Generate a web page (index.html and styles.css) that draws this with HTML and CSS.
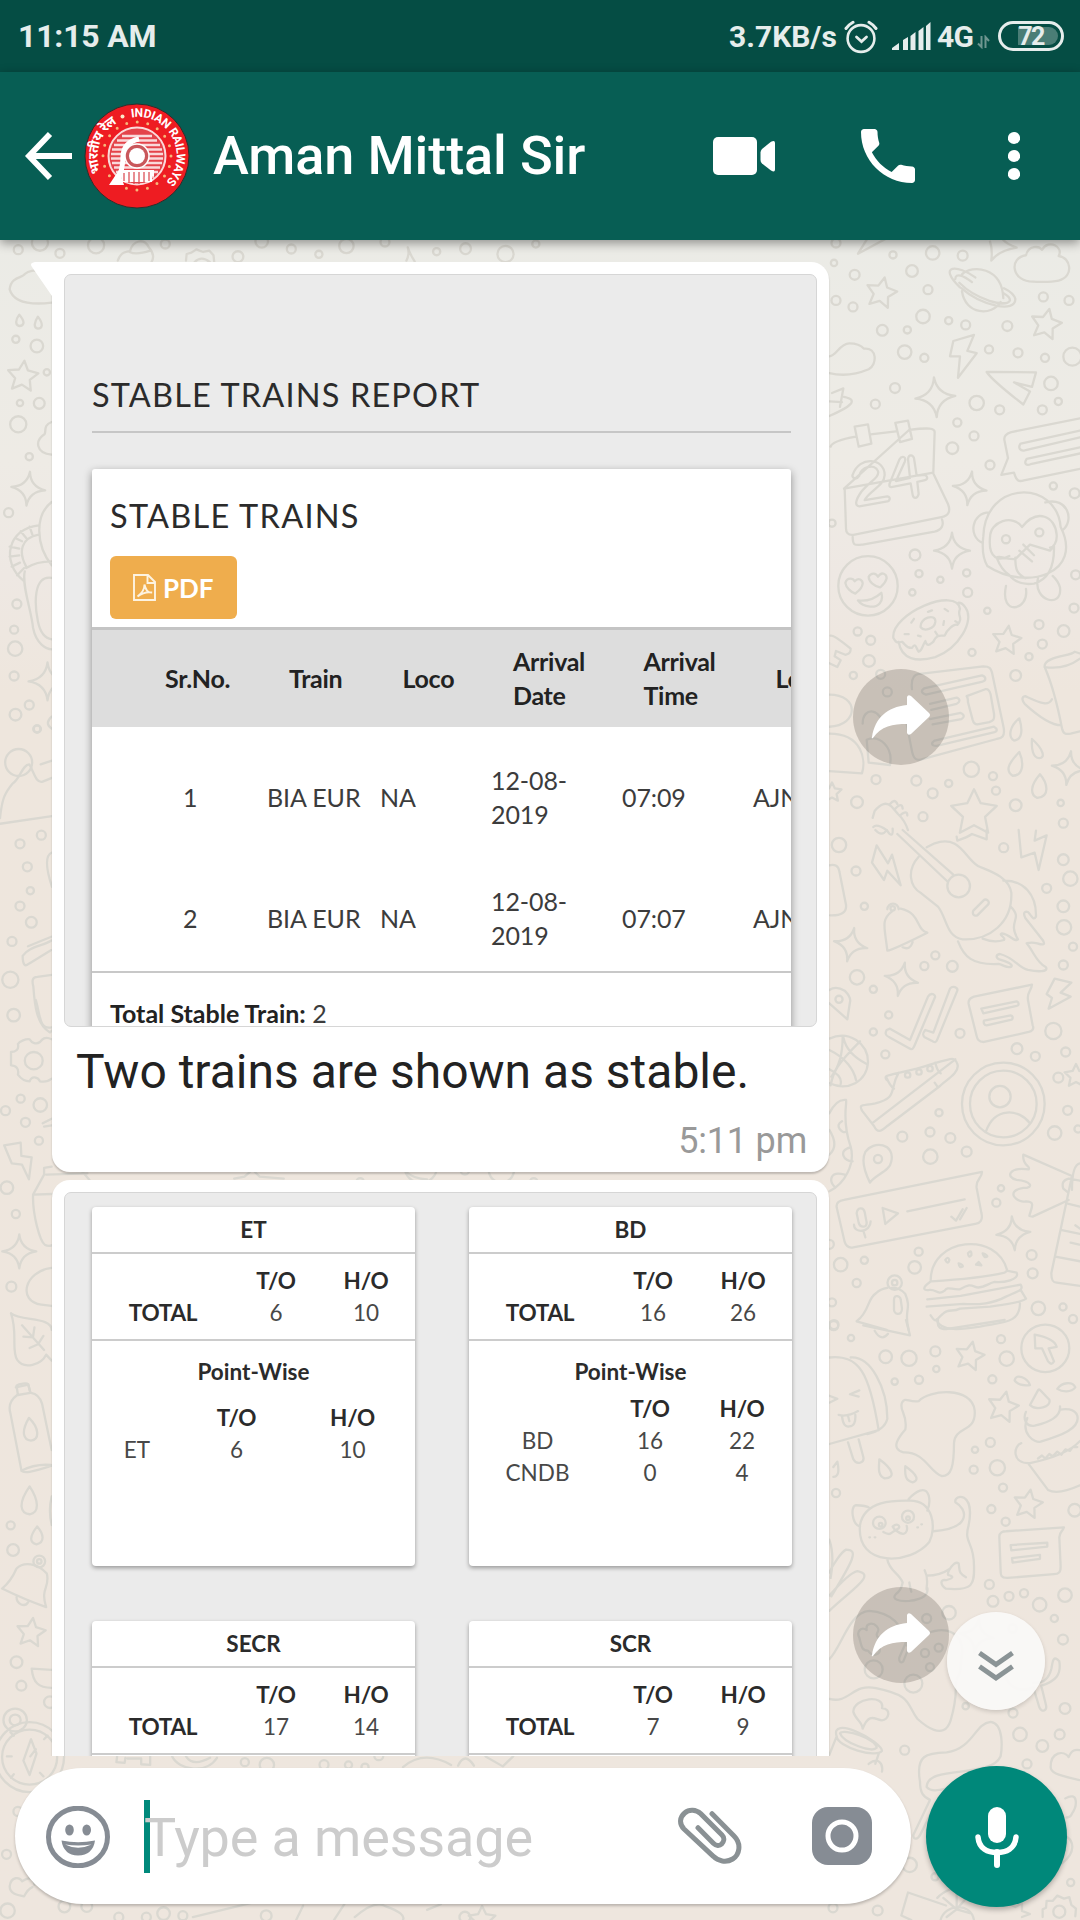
FILE: index.html
```html
<!DOCTYPE html>
<html lang="en">
<head>
<meta charset="utf-8">
<title>Aman Mittal Sir</title>
<link rel="stylesheet" href="styles.css">
</head>
<body>
<svg class="wallpaper" id="wallpaper" width="1080" height="1920" viewBox="0 0 1080 1920" aria-hidden="true">
  <defs><linearGradient id="sky" x1="0" y1="0" x2="0" y2="1"><stop offset=".125" stop-color="#ebebe6"/><stop offset=".24" stop-color="#eeebe5"/><stop offset=".3" stop-color="#eee8e3"/><stop offset=".36" stop-color="#eee6dd"/><stop offset="1" stop-color="#eee6de"/></linearGradient></defs>
  <rect class="sky" width="1080" height="1920" fill="url(#sky)"/>
  <g transform="translate(820 230) scale(.3333 .3827)">
    <path d="M114 62l30-42M114 62l64-30 30-14M510 30q8 20 4 50q22-26 76-34q-30-10-40-20M628 134c-54-5-60-62-10-68c8-28 40-24 48-14c20-30 66-8 50 16c36 2 48 54 0 64c-20 4-60 4-88 2zM426 160c10 62 90 66 116 28M426 116c30-26 120-20 124 62M420 150c-70-60-6-60 46-26M406 128c0-18 26-8 50 8M424 152c60 46 164 66 162 28c-4-14-20-22-34-28M418 138c50 44 140 66 152 46c0-8-6-12-18-18M28 330c22 0 30-34 60-34q30 0 44 14c40-4 40 42 14 54q-60 22-118 10M400 290l62-16-20 42 28 6-56 64 6-56-30 0zM500 371l148 1-12 38-54-12 48 24-20 34q-92-62-110-85zM36 426l34-12-10 48M28 448l38 2M72 436c46 8 20 26-44 50M104 514l40-6 10 50-38 8zM226 504l38-6 12 48-36 8zM32 566c4-14 50-22 76-26M152 534l76-8M268 522c60-6 76-4 76 6l-4 106-268 42zM340 636l44 80c10 22-2 32-20 34l-260 46c-22 4-26-8-26-16l-4-104M98 802c0 24 8 22 30 20l216-34c22-4 28-18 22-32M98 640c20-52 96-44 96 0c0 28-50 44-60 66l68-10c12 2 8 14-4 14l-80 12c-16-2-10-18 6-38c24-26 56-38 50-54c-10-22-54-10-56 12c-10 14-24 4-20-2zM210 660l28-60c8-12 22-8 16 6l-26 50 42-8-6-50c2-12 14-12 18-2l8 46 26-2c8 6 8 12-4 14l-20 4 4 32c-4 14-16 12-18 2l-6-30-58 10c-8 0-6-8-4-12zM780 492l-206 36c-16 4-24 12-20 24l10 44-20 44 38-6c8 24 16 24 30 20l168-30M780 524l-178 34c-10 12 0 20 12 18l166-34M780 568l-160 30c-10 14 0 18 12 14l148-28M490 800c6-148 220-148 232-24c70 120-100 170-220 102c-12-18-16-48-12-78zM508 738c-52 0-66 62-20 80M676 712c68-16 88 48 52 72M606 776c-26-34-96-16-96 28c-6 56 28 62 58 48M606 776c46-50 100-28 104 20c2 20-10 34-20 34M530 856c10-8 20 6 56 4l44-38 60 16 12-12c2 60-20 88-60 98q-50 6-76-24c-18-10-28-26-36-44zM586 856c0 30 4 42 30 54M598 838l38 28M610 822l32 28M558 930c-20 80 70 66 60 8M654 910c-16 60 74 80 66 24c-4-12-12-22-22-30M76 922c6-16 24-12 28-4c12-12 24-2 24 6c-2 14-14 20-22 26-14-4-28-16-30-28zM146 906c8-12 22-10 28 0c12-16 26-6 26 4c-4 14-12 18-20 24-16-4-34-14-34-28zM114 968q40 4 70-20c8 24-10 38-34 36q-24-2-36-16zM220 1066c-8-64 190-136 200-76c-10 20 12 22-8 42c-10-4-32 14-38 28c-14 0-24-4-34 16c-12 8-18 14-24-2c-10 14-8 24-20 28c-8-8-8-26-20-10c-16 2-20-10-30-16c-20 6-20-4-26-10zM236 1076c8 46 54 54 110 40c70-22 120-96 90-130c-6-8-14-12-20-12M302 1038c-4-24 46-38 44-14c-2 18-34 26-44 14zM274 1026l8-10M324 998l12-4M374 990l10 6M406 1022l10 6M372 1022l-2 10M346 1050l6 8M294 1060l8 2M254 1056l12 0M32 1060q10-2 60 34c0 12-6 14-16 16l-28-10-4 14 18 10-10 18-24-10M28 1214c90 0 90 80 0 84M28 1316c100 0 110 70 98 104l-98-6M128 1290c0-48 60-40 60 10M140 1332c40-14 80 20 70 66l-64-6zM300 1160l190-20c20 0 22 6 26 16l34 140c8 30-8 32-20 34l-220 52c-24 8-30-4-34-20l-18-80M276 1200c-4-30 6-38 20-40M312 1198l174-34c14 4 12 14 2 16l-170 34c-14-4-16-10-6-16zM330 1238l80-16c12 4 10 12 0 16l-76 16M330 1278l92-16c12 4 12 12 2 16l-86 14M344 1334l178-36c12 6 10 12 2 14l-174 36c-18 0-16-8-6-14zM440 1218l56-18c12-2 14 8 16 14l10 50c2 16-2 18-14 22l-36 6c-10 0-12-6-14-12l-14-46q0-12-4-16zM674 1142q30 60 52 160c4 16 12 16 26 14l28-6M674 1142c-4-28 80-28 90-40l14 4M674 1142q60 8 106-22M696 1226c-12 20-34 10-80-8c-14 2-8 14-2 20q70 56 110 56M598 1276c-30 20-34 50-16 58c26-2 26-30 16-58zM636 1330c36 28 40 50 22 50c-20 0-24-26-22-50zM598 1364c-38 34-40 50-20 62c30 0 36-30 20-62zM660 1422c-30 30-30 54-8 62c40-4 30-40 8-62zM158 1536l6-18q28-30 50-12l20 20q20 16 30 42M160 1560q10-10 40 8M210 1500q14-16 22 0M226 1512q20-18 22 0M240 1530q22-16 22 0"/>
  </g>
  <g transform="translate(820 830) scale(.3333)">
    <path d="M166 0q20 22 34 0q20 30 18-4M232 12l152 144M248 0l152 134M296 80c-36 40-28 90 8 110l50 40c28 36 24 90 74 98c80 4 150-50 146-140c-8-50-70-66-100-80c-40-24-54-94-130-68l-24 12M460 242l30-30c8-8 22 2 14 12l-32 32c-10 4-16-4-12-14zM550 152c60-2 100 40 98 108c-8 14-14-4-24-14c-16-4-12 10-8 18l52 66c12 18-4 14-16 10-18-4-24-2-32 0c22 26 28 56 58 72c8 14-24 14-54 8c-30-8-40-36-84-48c-14 2-12 12-2 16c24 6 42 16 36 22c-14 6-20-4-38-8c-80 4-104-22-122-68M572 230c40 40-12 40 22 98c-12 10-22-14-48-18c-12 4 12 12 6 20q-30 10-64-4M410 20l2 12q30-10 44-20l44 16 0-28M596 0l8 82 40-14 12 52 24-104-36 16 4-30M170 46l34 54 12-26 26 92-40-44-10 28-36-52zM28 106q26-6 30 18l20 100q4 34-48 32M216 244c-34 26-22 46-14 118q16-2 120-54c-34-8-20-60-80-72M248 352q22 10 30-16M202 238a17 17 0 1 1 34 0M28 480q20-14 46 2q20 20 16 34l-8 52-54-48M200 600l10-4 60 34 54-130c10-16 26-4 20 4l-60 142c-6 14-8 12-14 10l-62-34c-14-6-12-14-8-22zM316 600l24 8 50-132c8-10 24-4 22 6l-60 146c-4 12-10 8-14 6l-24-12c-10-10-2-16 2-22zM446 522c-2-12 4-18 16-22l174-36c-2 20-16 22-12 46l14 76c6 12-4 18-12 20l-134 30c-18 0-20-10-22-18zM484 536l106-22c8 4 8 12 0 14l-100 22zM492 572l80-16c8 2 8 12 0 14l-72 16c-8 0-10-8-8-14zM704 446l50 12-32 30 30 12-66 36 10-32-16-12zM28 626c60-28 116 16 116 70c-4 60-60 88-116 64M68 622c0 60-18 98-34 118M28 660c50 24 74 60 80 90M120 634c-70 70-80 90-88 132M70 622q10 50 70 80M28 718q40 20 34 44M200 750c-10-16 0-12 90-34c110-32 114-40 122-14c10 26-40 52-52 66l-158 120c-22 20-30 20-40 0l-36-46c-10-20 0-14 40-22c70-18 40-40 70-92M200 744q10 24 22 32M156 880l250-192M346 698q6 26 16 32M344 758l10 14M118 822M28 850c10-20 26-44 50-40c4 10-14 60 14 140c14 50-16 110-64 134M28 900q30 48 0 74M66 874c-24 12 0 36 10 32M92 952c-40 8-20 44 6 42M74 1034c-46-12-48 20-28 38M150 1058q-30-60-14-92c24-36 90-26 78 28c-4 30-48 40-64 64zM50 1132c-2-14 8-20 22-22l414-84c0 20-20 22-16 48l14 74c6 22-4 32-18 34l-366 70c-18 4-24-10-26-16zM110 1150c2-18 20-20 24-4l6 32c0 16-20 16-24 0zM102 1184c0 28 50 24 50-10M130 1202l6 20M188 1134l46 16-38 32zM262 1144l172-36M394 1160l14 12 20-34M420 1168l20-34M610 974l146 64M610 974c-4 36 24 32 16 44c-60-8-70 24-36 32c44 4 54 24 20 24c-60 10-14 48 8 40c30 0 16 20 10 44l10 2 108-50M756 1038l-62 292c0 20 4 28 16 28l70 10M742 1086l-12-10q-8-24 16-30l34 6M756 1080q0-76 24-80M740 1120l40 10M722 1200l58 12M706 1280l74 14M752 1238l26 6M766 1186l14 10M332 1352c0-130 200-150 230-30l-8 6c-60 14-150 22-220 26M330 1356c-30 22-14 26-2 24 20-4 24 18 46 2c10-14 20-2 46-4c26-14 30-14 44-8c20 10 40-10 60-14c26 2 76-6 66-28l-30-6M322 1408l100-10 180-34c10 16-4 18-44 36-40 22-80 24-128 22l-110 8M602 1380l16 26c-16 14-80 20-108 24l-90 6c-22 12-34-2-52 16c-20 14-16 34-36 4M350 1468c10 40 80 30 130 22c70-14 120-10 120-70M266 1500c-16-60 10-60-10-108c-10-14-30-20-40-18M110 1474c40-30 30-66 58-84c10-10 20-14 34-16M110 1474l90 26M222 1410c0-20 20-10 20-2l4 28c0 24-26 18-24 0zM376 1290q8-12 12 0q-4 16-12 0zM416 1300q14 4 12 10q-10 6-12-10zM444 1270q12-14 10 6q-8 10-10-6zM488 1270q14 4 14 10q-10 6-14-10zM468 1304l8-8 8 10z"/>
    <circle cx="416" cy="168" r="34"/><circle cx="550" cy="822" r="124"/><circle cx="550" cy="822" r="100"/><circle cx="540" cy="800" r="32"/><path d="M498 904c26-74 100-68 132-24"/>
  </g>
  <g transform="translate(820 1320) scale(.3333 .3827)">
    <path d="M130 14l140 26-12-40M164 28q20 30 40 8M354 0c-4 20 8 24 24 24l176-24M646 74l-2-36q60 10 66 32l-24 4 16 34c-8 12-12 4-18 0l-18-34zM28 98c90-8 120 40 148 190l-148 36M92 98c60-4 110 80 110 160q-8 30-60 40M84 320l16 44c10 16 34 10 30-6l-14-46M28 198l24 8-24 10M118 184l-28 10 26 6M56 248q26 6 58-10M66 252q4 30 22 26q20 0 18-30M84 250l4 14M246 216c10-16 20 0 50-4c30-30 160-40 168 24c6 60-60 40-62 86c0 60-8 86-36 86c-38-10-50-64-116-62c-40-10-14-40 6-60c8-40-20-50-10-70zM584 158c4-22 40-4 46 12c-18 2-36 0-46-12zM712 180c14-18 46-20 54-4c-12 14-40 12-54 4zM40 384l12-14q10 40-12 40M178 364c38 24 52 48 16 50c-24-8-16-34-16-50zM256 382c40 24 40 38 22 42c-22-4-24-20-22-42zM630 222l24-38c4-8 10 4 34 24c8 20-40 30-58 14zM618 240c-10 18 0 40 26 36q80-16 76-50M622 256c-20 40 20 66 40 62c60-16 120-34 110-68c-8-20-40-18-50-16M604 322c-24 6-30 54 26 52q110-20 150-58M624 374l60 70q30 14 96-12M654 362l12-8 10 8 12-12 10 6 14-12 12 8 12-14 14 4 8-10 14 0M120 536c14-70 120-64 150-64c70 0 80 70 58 108c-56 60-220 68-208-44zM120 540c-24-6-30-54-12-56q30 0 42 8M266 468c20-20 50-36 60-10q6 20-4 40M340 552c120-8 100-60 66-76c-4-22 60-28 40 60c-16 50 16 40 16 106c2 50-4 66-84 60c-16-8-20-26 0-22c24-6 24-10 6-14c-2-10 20-38 32-30c4 20-2 24 22 36M202 626c6 30 34 34 46 60q-4 20-20 30c-16 14 10 20 40 18q60-6 54-34M268 686q4 20 6 24M314 654c14 24 4 44 6 50M320 668q40 0 70-18M190 554c26 12 20 0 38-4c30 20 36 0 32-12M218 540c14-12 24 0 18 4l-10 6zM148 568l2 0M164 568l2 0M292 542l2 0M304 534l2 0M28 574q16 40 4 100M28 660c10-20 36-54 50-60c40 0 20 30-44 122M28 720c20-20 60-60 84-64c60 10-20 50-84 104M538 566c0-10 10-14 20-14l174-10c-6 14-12 8-14 26l4 76c0 16-6 20-20 20l-140 10c-20 0-20-8-20-18zM572 588l110-6v10l-108 10zM576 622l84-8v10l-82 10zM28 886c36-30 60-124 120-126c60 4 100 30 112 90M28 990c60 14 70-42 140-28c110 20 90 40 124 80c20 16 80 60 100 4c20-60 14-70 16-100M118 830c-10-16 6-30 22-20c-4-20 20-20 30-10c16 16-10 16 4 30c20-10 18 20 4 22c8 24-20 30-34 12c-20 0-20-14-26-34zM238 882l20-40c6-8 14 0 10 10l-18 40c-8 6-14 0-12-10zM310 824c60-30 130-10 114 60c-2 40-6 44-14 54M128 1068c20-46 40-22 58-22c20 0 30-30 0-32c10-36-86-28-86 10c6 20 28 26 28 44zM28 1136l22-48c-10-26 20-28 60-12c40 14 76 40 76 50c-16 20-134-10-136-38M60 1080c10-14 110 14 110 38c-14 14-100-14-110-38zM146 1160c30-20 44 0 40 20M176 1134l-10 26M300 1206c-14-70 20-74 80-76c80-10 84-76 132-80c40 4 34 70 30 90c-30 60-220 20-222 80c20 20 60 0 96 0M300 1206c0 30 10 40 30 48l-50 92c0 14 14 10 20 0l46-80M692 1168c0-40 40-44 54-26c10-20 20-20 34-18M692 1168c0 14 14 20 86 34M556 930c14 40 60 40 84 30M640 960l18 52c8 16 24 8 20-6l-14-50c46-14 60-30 54-64c-20-20-20 4-24 20q-12 40-54 36M244 1556l20-60 114 34M274 1568l-30-12M352 1510c20-20 60-30 80-30M362 1568c10-40 90-50 100 0M410 1540l-40-30M410 1540l0-40M410 1540l30-30M410 1540l-30 20M410 1540l40 10M668 1560v-20l10-4 2-18 18 0 14-14 20 8 16-4 6 20 14 10-2 20M736 1250c40-20 36 20 20 40c-4 10-14 10-16 10M740 1350c20 10 30 40-14 70M556 1520l30 14 20-10 0 20 24 8-24 8"/>
    <ellipse cx="676" cy="74" rx="72" ry="62"/><ellipse cx="178" cy="530" rx="19" ry="16"/><ellipse cx="264" cy="514" rx="18" ry="16"/><ellipse cx="718" cy="1546" rx="18" ry="16"/>
  </g>
  <g transform="translate(0 240) scale(.3444 .3333)">
    <path d="M150 188c-50 6-110 4-122-40c4-40 40-34 44-46c10-10 30-14 44-4M342 62c10-30 26-24 36-30c8-30 40-40 54-10q20 24 8 44M376 36q20 10 60-4M540 62l2-20 14-4 14-10 20 8 18-4 12 14 2 20M565 66q20-20 44 0M1180 62q10-20 4-40q6 20 20 42M56 224c20 24 12 34 0 34c-12-2-12-18 0-34zM110 230c18 24 12 36 0 36c-14-2-10-20 0-36zM150 546c-24 10-16 24-20 36c-30 20-26 58 20 62M150 786c-50 40-46 130 0 190M112 856c-90 10-110 110-44 166M112 884c-50 10-60 50-36 96M28 920l28 6M28 950l28-4M34 980l24-12M50 1006l20-22M44 894l20 10M60 874l16 20M86 860l8 24M76 984q30-20 74-20M72 994c-10 40 20 120 24 170c10 50 40 64 54 64M150 1014c-54-10-50 80-40 130q10 50 40 54M150 1430q-22 20 0 36"/>
  </g>
  <g transform="translate(0 240) scale(.3333 .957)">
    <path d="M0 604c6-20 14-26 38-36c20-4 30-20 50-20c14 8 20 20 40 18l28-4M0 610l156-8M122 548l34-4M156 640q-30 4 0 36M68 748c20-10 60-10 86-16M68 748q0 14 20 8l66-14M84 738l70-10M156 768l-44 2q-20 0-12 10c4 20 10 40 50 48l6-2"/>
  </g>
  <g transform="translate(0 1000) scale(.3444 .3333)">
    <path d="M104 0c14 50 10 90 46 82M150 118c-20-10-28 0-34 8c-10 8-24 4-30-8c-10-2-30 6-34 14c4 16-6 24-20 24v40c14 0 24 10 20 28c10 14 22 20 34 20c6-18 24-14 30 0q20 4 34-8M124 370l26-14M128 380l22-4M12 436l48-8 2 40 30 4-8 66-20-44-30-4zM150 500l-22 4 0 20-32 60c-2 60 20 140 34 150q10 6 20 2M134 524l120-4M96 584l54-2M240 516l20 24M680 536l30-6 16-14M740 516l14 14 70 6M1180 516q20 20 60 22M150 804c-80 10-100 100-30 110l30 4M32 940c30 24 118 10 118 50M32 940c20 60 0 110 18 140c20 30 70 14 84-16l16 18M64 976l64 74M96 1010l4-28M112 1030l14-22M68 1010l28 2M86 1044l26-12M46 1162l36-8 6 22"/>
    <circle cx="98" cy="182" r="26"/>
  </g>
  <g transform="translate(0 1360) scale(.3444 .3571)">
    <path d="M48 72c8-6 30-8 34-4l6 24-36 6zM50 98c-20 14-26 30-20 50l32 160q4 16 88-12M62 310q40-20 86-16M90 92q24 4 32 30l28 130M84 162c-24 40-16 62 6 64c26-4 24-36-6-64zM86 354c-36 50-26 76 0 78c30-4 26-40 0-78zM108 466c-24 30-22 46-2 50c26-6 20-30 2-50zM150 382q-10 40 0 80M48 584c20-20 60-16 88 14c10 40-20 40-2 94q-60-20-128-52q26-20 42-56zM48 664c0 20 24 30 34 14M150 868l-58-4c4 40 20 54 58 54M28 1474c4-30 30-26 36-14c30-20 36 0 36 10M28 1474c0 20 20 24 42 28q10-20 24-26M90 1062l-22 60 18 40 20-60zM88 1110l16-20M40 1052l-10-10M138 1052l-10 10M20 1110l14 0M40 1160l-8 10M116 1156l10 10M340 1110l-2 16 24 2 2-14M370 1116l40 0 0 16 26 2 0-24M500 1110c20 40 100 50 130 4M540 1110q20 30 70 4M1170 1140q60-50 140-6M1330 1136q20-40 46 0M1410 1110l50 28 30-28M560 1560l170-40M860 1568l20-40M970 1568l30-44M1030 1560q60-50 90-30q60 20 50 38M1240 1540l40-16"/>
    <ellipse cx="44" cy="1008" rx="34" ry="32"/><ellipse cx="44" cy="1008" rx="16" ry="15"/><ellipse cx="86" cy="1112" rx="100" ry="98"/><ellipse cx="86" cy="1112" rx="80" ry="77"/>
  </g>
</svg>

<div class="phone">
  <div class="status">
    <span class="clock">11:15 AM</span>
    <div class="status-right">
      <span class="speed">3.7KB/s</span>
      <svg class="alarm" width="34" height="34" viewBox="0 0 34 34"><g fill="none" stroke="#e6edec" stroke-width="2.6" stroke-linecap="round"><circle cx="17" cy="18.5" r="13.4"/><path d="M2 8.5Q5 4.500 9 2.300M32 8.500Q29 4.500 25 2.300" stroke-width="3"/><path d="M12.500 17l5 4.500 5-4.500" stroke-width="2.8"/></g></svg>
      <svg class="bars" width="40" height="30" viewBox="0 0 40 30"><path fill="#e6edec" d="M1 29v-2l7-5v7zM12 29v-10l5-3v13zM19.500 29v-14l5-4v18zM27.500 29v-19l5-4v23zM35 29v-24l4.500-4v28z"/></svg>
      <span class="net">4G</span>
      <svg class="updown" width="13" height="14" viewBox="0 0 13 14"><path d="M4.500 1v11L1 8.500M8.500 13V2l3.500 4" fill="none" stroke="#6f9690" stroke-width="2"/></svg>
      <div class="battery"><span class="charge"></span><span class="level">72</span></div>
    </div>
  </div>
  <header class="bar">
    <svg class="back" width="50" height="50" viewBox="0 0 50 50"><path d="M27 3L6 25l21 22M6 25h43" fill="none" stroke="#fff" stroke-width="5.800"/></svg>
    <svg class="avatar" width="106" height="106" viewBox="0 0 106 106">
      <defs><path id="arcEn" d="M47.500 14.500A38.500 38.500 0 0 1 82 79"/><path id="arcHi" d="M17.500 70A38 38 0 0 1 36.500 18.500"/></defs>
      <circle cx="53" cy="53" r="52" fill="#ee1c22" stroke="#2b2f2c" stroke-width="1"/>
      <text class="seal"><textPath href="#arcEn" textLength="96">INDIAN RAILWAYS</textPath></text>
      <text class="seal hindi"><textPath href="#arcHi" textLength="57">भारतीय रेल</textPath></text>
      <circle cx="38.500" cy="13.500" r="2" fill="#fbe9c8"/>
      <circle cx="53" cy="53" r="34" fill="none" stroke="#f7b77a" stroke-width="3" stroke-dasharray="0 10.680" stroke-linecap="round"/>
      <circle cx="53" cy="53" r="28.500" fill="#e4434a" stroke="#fbd9d9" stroke-width="2"/>
      <path d="M38 33h30M33 37.500h40M30 42h46M28 46.500h50M27 51h52M27 55.500h52M28 60h50M30 64.500h46M32 69h42M36 73.500h34" stroke="#fff" stroke-width="2.400" opacity=".8"/>
      <path d="M33 79q6-12 6-26q1-14 16-17" fill="none" stroke="#fff" stroke-width="5"/>
      <path d="M38 76h30M36 70h34" stroke="#fff" stroke-width="6"/>
      <path d="M25 82l10-15 5 15z" fill="#fff"/>
      <circle cx="53" cy="53" r="12" fill="#c9575b" stroke="#fff" stroke-width="1.500"/><circle cx="53" cy="53" r="8" fill="#fff"/>
      <path d="M40 70v8M45 69v11M50 69v12M55 69v12M60 69v11M65 69v9" stroke="#d9444c" stroke-width="1.200"/>
    </svg>
    <h1 class="name">Aman Mittal Sir</h1>
    <svg class="video" width="62" height="38" viewBox="0 0 62 38"><rect width="44" height="38" rx="5" fill="#fff"/><path d="M49 12L58 4.800Q62 2.500 62 6V32.500Q62 36 58 33.500L49 26.500Q47.500 25 47.500 23V15.500Q47.500 13.500 49 12z" fill="#fff"/></svg>
    <svg class="call" width="54" height="54" viewBox="3 3 18 18"><path fill="#fff" d="M20 15.500c-1.250 0-2.450-.2-3.570-.57-.35-.11-.74-.03-1.020.24l-2.200 2.200c-2.830-1.440-5.150-3.750-6.590-6.590l2.200-2.210c.28-.26.36-.65.25-1C8.700 6.450 8.500 5.250 8.500 4c0-.55-.45-1-1-1H4c-.55 0-1 .45-1 1 0 9.390 7.610 17 17 17 .55 0 1-.45 1-1v-3.500c0-.55-.45-1-1-1z"/></svg>
    <svg class="more" width="12" height="50" viewBox="0 0 12 50"><g fill="#fff"><circle cx="6" cy="7" r="6.100"/><circle cx="6" cy="25" r="6.100"/><circle cx="6" cy="43" r="6.100"/></g></svg>
  </header>

  <main class="chat">
    <section class="row">
      <article class="bubble first">
        <svg class="tail" width="24" height="38" viewBox="0 0 24 38"><path d="M24 0H4Q-2 1 1 5L21 34H24z" fill="#fff"/></svg>
        <div class="photo report">
          <h2 class="report-title">STABLE TRAINS REPORT</h2>
          <div class="sheet">
            <h3 class="sheet-title">STABLE TRAINS</h3>
            <div class="pdf"><svg width="23" height="27" viewBox="0 0 23 27"><path d="M1 1h14l7 7v18H1zM14.500 1v8H22M4.500 22.500q7-5 7-12q2 9 7.500 8q-7-1.500-14.500 4" fill="none" stroke="#fdf3e1" stroke-width="1.900"/></svg><span>PDF</span></div>
            <div class="cells head"><span>Sr.No.</span><span>Train</span><span>Loco</span><span>Arrival<br>Date</span><span>Arrival<br>Time</span><span>Location</span></div>
            <div class="cells line1"><span>1</span><span>BIA EUR</span><span>NA</span><span>12-08-<br>2019</span><span>07:09</span><span>AJNI</span></div>
            <div class="cells line2"><span>2</span><span>BIA EUR</span><span>NA</span><span>12-08-<br>2019</span><span>07:07</span><span>AJNI</span></div>
            <p class="sum"><b>Total Stable Train:</b> 2</p>
          </div>
        </div>
        <p class="caption">Two trains are shown as stable.</p>
        <time class="time">5:11 pm</time>
      </article>
      <button class="forward" aria-label="Forward"><svg width="60" height="46" viewBox="0 0 60 46"><path d="M1 43C4 24 16 13 36 11V3Q37 0 40 2L58 19Q60 21 58 23L40 40Q37 42 36 39V30C22 30 10 32 2 44Q0 45 1 43z" fill="#fff"/></svg></button>
    </section>

    <section class="row">
      <article class="bubble">
        <div class="photo grid">
          <div class="card">
            <h4>ET</h4>
            <div class="totals"><i></i><b>T/O</b><b>H/O</b><b>TOTAL</b><span>6</span><span>10</span></div>
            <div class="points single"><h5>Point-Wise</h5><div class="pts et"><i></i><b>T/O</b><b>H/O</b><span>ET</span><span>6</span><span>10</span></div></div>
          </div>
          <div class="card">
            <h4>BD</h4>
            <div class="totals"><i></i><b>T/O</b><b>H/O</b><b>TOTAL</b><span>16</span><span>26</span></div>
            <div class="points"><h5>Point-Wise</h5><div class="pts bd"><i></i><b>T/O</b><b>H/O</b><span>BD</span><span>16</span><span>22</span><span>CNDB</span><span>0</span><span>4</span></div></div>
          </div>
          <div class="card low">
            <h4>SECR</h4>
            <div class="totals"><i></i><b>T/O</b><b>H/O</b><b>TOTAL</b><span>17</span><span>14</span></div>
          </div>
          <div class="card low">
            <h4>SCR</h4>
            <div class="totals"><i></i><b>T/O</b><b>H/O</b><b>TOTAL</b><span>7</span><span>9</span></div>
          </div>
        </div>
      </article>
      <button class="forward" aria-label="Forward"><svg width="60" height="46" viewBox="0 0 60 46"><path d="M1 43C4 24 16 13 36 11V3Q37 0 40 2L58 19Q60 21 58 23L40 40Q37 42 36 39V30C22 30 10 32 2 44Q0 45 1 43z" fill="#fff"/></svg></button>
    </section>
  </main>

  <button class="to-end" aria-label="Scroll to end"><svg width="36" height="32" viewBox="0 0 36 32"><path d="M1.500 3L18 14.500 34.500 3M1.500 16.500L18 28 34.500 16.500" fill="none" stroke="#8b9496" stroke-width="5"/></svg></button>

  <footer class="composer">
    <div class="field">
      <svg class="smile" width="64" height="62" viewBox="0 0 64 62"><ellipse cx="32" cy="31" rx="29.500" ry="28.800" fill="none" stroke="#868c94" stroke-width="5"/><g fill="#868c94"><ellipse cx="23.500" cy="24" rx="4.300" ry="5.500"/><ellipse cx="40.700" cy="24" rx="4.300" ry="5.500"/><path d="M15.500 34.500Q32 38 49 34.500Q47 49 32 49.500Q17.500 49 15.500 34.500z"/></g><path d="M19 38.500Q32 40.500 45.500 38.500Q32 45 19 38.500z" fill="#fff"/></svg>
      <span class="entry"><i class="caret"></i><span class="hint">Type a message</span></span>
      <svg class="clip" width="64" height="58" viewBox="84 54 192 174"><path d="M186 74L252 141C276 165 268 198 248 210C228 222 204 216 190 202L102 120C86 104 90 84 104 72C118 60 138 62 152 74L216 138C226 148 220 160 215 165C209 171 198 171 190 163L144 116" fill="none" stroke="#8a9194" stroke-width="15" stroke-linecap="round"/></svg>
      <svg class="camera" width="60" height="58" viewBox="0 0 60 58"><rect width="60" height="58" rx="16" fill="#868c94"/><circle cx="30" cy="29" r="14" fill="none" stroke="#fff" stroke-width="5"/></svg>
    </div>
    <button class="mic" aria-label="Voice message"><svg width="44" height="62" viewBox="0 0 44 62"><rect x="13" y="1" width="18" height="36" rx="9" fill="#fff"/><path d="M3 31C4 43 13 46.500 22 46.500S40 43 41 31" fill="none" stroke="#fff" stroke-width="5.500" stroke-linecap="round"/><path d="M22 46v13" stroke="#fff" stroke-width="6" stroke-linecap="round"/></svg></button>
  </footer>
</div>
<script src="wallpaper.js"></script>
</body>
</html>
```
FILE: wallpaper.js
```js
// Scatters the small shapes of the chat wallpaper. Each field has its own
// origin (ox, oy) and units per pixel (ux, uy); sizes are in pixels.
const fields = [
  { ox: 820, oy: 230, ux: 3, uy: 2.613,
    dots: "48 34 5,42 86 3.5,104 117 5.5,48 184 5,99 201 5,338 60 7.5,219 65 4,276 107 6.5,428 67 5.5,324 156 5,309 226 7.5,386 237 4,437 248 5,562 251 5.5,670 175 5,747 184 5,187 262 6,262 261 4,254 319 7.5,313 334 4.5,507 312 4.5,594 321 5,675 334 4.5,757 331 10,693 401 7.5,225 413 5.5,166 455 5,470 452 8,539 470 5,715 448 4,667 470 5,412 503 4.5,462 538 5,397 570 6.5,510 614 5,700 669 4,764 688 5.5,36 766 4,285 849 6,297 898 4,361 914 3.5,277 947 3.5,440 896 4,443 947 5,502 995 3.5,767 901 5,762 988 5,657 1031 5,731 1048 6.5,667 1082 5,627 1115 4,456 1104 4,113 1049 4.5,152 1072 5,147 1126 6.5,100 1164 4,182 1161 5,202 1207 5,587 1164 6,454 1409 8.5,519 1427 4.5,528 1465 4.5,289 1439 5.5,386 1446 4,168 1436 5,338 1472 5.5,111 1495 6.5,309 1533 5,587 1503 6.5,722 1497 3.5,730 1550 5,558 808 4.5,658 790 4.5,144 930 33",
    stars: "184 165 16 12,678 247 16 12,560 1073 15 8,462 1524 24 0,36 1470 10 0",
    sparks: "346 437 20 -4,449 675 17 8,396 838 18 0,746 1406 17 8" },
  { ox: 820, oy: 830, ux: 3, uy: 3,
    dots: "57 45 8,108 123 5,133 229 4,551 53 5,730 89 6,751 146 8,680 175 5,730 229 6.5,732 292 8,759 350 4.5,730 405 5,346 376 4.5,313 408 4.5,397 409 6,111 442 8,160 478 4,206 555 4,160 606 4,196 673 4.5,420 610 5,57 508 4,591 656 6,646 679 5,700 603 9,737 666 5,715 743 5.5,743 841 5,704 909 7.5,774 897 4,357 848 4,247 920 5.5,330 906 5,391 924 5.5,440 965 5.5,331 980 8,174 987 4.5,543 1075 3.5,529 1118 4.5,635 1275 5.5,638 1330 5.5,655 1435 7.5,729 1431 4,759 1467 4.5,296 1265 4.5,284 1312 7,62 1304 7.5,133 1291 4,110 1359 4.5,28 1243 5,36 1417 4.5,41 1487 5,263 735 3,297 726 3,330 716 3,218 235 2.5,224 1358 8,224 1358 3",
    stars: "768 738 12 0",
    sparks: "92 344 17 12,244 448 17 12,580 1210 17 -5" },
  { ox: 820, oy: 1320, ux: 3, uy: 2.613,
    dots: "42 12 5,93 47 3.5,197 96 7,267 100 8.5,346 82 5.5,349 128 3.5,297 156 4.5,224 161 3.5,543 50 4.5,560 101 8,517 155 4.5,511 320 5,465 339 3.5,461 391 4.5,532 386 8.5,549 438 4.5,514 494 4.5,557 527 4.5,764 497 7,48 452 4.5,508 691 5,519 735 6,567 722 5,612 714 4.5,659 744 7.5,735 719 7.5,703 780 4,729 835 5.5,387 765 7.5,735 1015 6,579 1027 5,600 1083 7.5,667 1113 6.5,719 1083 5.5,621 1160 5,437 1009 3.5,254 1124 5,161 913 10,280 950 10,315 870 4.5,356 856 4.5,330 907 4.5,320 780 5,578 806 4.5,269 1424 8,345 1455 4,39 1536 5,173 1543 5.5,752 1470 4,182 535 2,264 518 2",
    stars: "449 95 15 12,549 228 16 12,624 482 15 10",
    sparks: "470 825 17 8" },
  { ox: 0, oy: 240, ux: 2.904, uy: 3,
    dots: "53 29 5,174 40 5,116 8 9,279 16 9,480 12 5,691 50 6,760 4 7,846 27 5,926 43 4,1006 18 8,1118 6 5,1268 35 4,1352 26 6,1468 42 9,1556 12 4,46 298 4,107 318 7,58 489 3.5,114 490 6,53 553 9,136 397 3.5,85 650 4,25 818 5,49 1092 5,41 1169 4.5,44 1226 8,41 1308 5,85 1395 5,45 1424 6.5,107 1467 4",
    stars: "66 410 16 6",
    sparks: "82 746 17 6,138 1324 19 0" },
  { ox: 0, oy: 240, ux: 3, uy: 1.045,
    dots: "56 546 15,60 631 5,124 622 5,82 655 5,60 696 5,91 680 4,94 713 6,36 733 5,31 773 9,41 810 7,112 511 4",
    stars: "", sparks: "" },
  { ox: 0, oy: 1000, ux: 2.904, uy: 3,
    dots: "16 332 5,60 296 4.5,117 315 7.5,74 367 5,113 422 4.5,20 563 7,46 642 4.5,33 860 5.5,1046 545 4,1350 510 5,1456 510 14,1222 500 18,1550 545 4",
    stars: "", sparks: "56 754 17 0" },
  { ox: 0, oy: 1360, ux: 2.904, uy: 2.8,
    dots: "31 463 4.5,38 532 6.5,114 564 6.5,114 564 2.5,48 846 6.5,62 912 5.5,145 958 6.5,711 1126 4.5,775 1134 8,941 1133 5,1012 1134 4,1060 1140 4,19 1384 5,52 1264 5,22 1542 8,187 1530 6.5,252 1530 6,425 1560 5,475 1550 7,531 1556 5,773 1556 6,345 1560 5,1350 1560 6,1100 1108 5",
    stars: "90 764 15 8,1400 1568 14 0", sparks: "" }
];

const star = "M0-1L.28-.42.95-.31.46.15.59.81 0 .5-.59.81-.46.15-.95-.31-.28-.42Z";
const spark = "M0-1Q.1-.14 1 0Q.1.14 0 1Q-.1.14-1 0Q-.1-.14 0-1Z";
const ns = "http://www.w3.org/2000/svg";
const wallpaper = document.getElementById("wallpaper");

function add(tag, attrs) {
  const node = document.createElementNS(ns, tag);
  for (const key in attrs) node.setAttribute(key, attrs[key]);
  wallpaper.appendChild(node);
}

const rows = list => list ? list.split(",").map(s => s.split(" ").map(Number)) : [];

for (const f of fields) {
  const at = (x, y) => [f.ox + x / f.ux, f.oy + y / f.uy];
  for (const [x, y, r] of rows(f.dots)) {
    const [cx, cy] = at(x, y);
    add("circle", { cx, cy, r: r * 0.9 });
  }
  for (const [kind, d] of [["stars", star], ["sparks", spark]]) {
    for (const [x, y, r, turn] of rows(f[kind])) {
      const [cx, cy] = at(x, y);
      add("path", { d, transform: `translate(${cx} ${cy}) rotate(${turn}) scale(${r})` });
    }
  }
}
```
FILE: styles.css
```css
* { box-sizing: border-box; margin: 0; padding: 0; }
body { width: 1080px; height: 1920px; overflow: hidden; background: #eee6dd; font-family: Roboto, "Liberation Sans", sans-serif; }
button { border: 0; background: none; }
svg { display: block; flex: none; }
i { font-style: normal; }

.wallpaper { position: absolute; left: 0; top: 0; z-index: -1; }
.wallpaper path, .wallpaper circle, .wallpaper ellipse { fill: none; stroke: #dad8d1; stroke-width: 2.3px; stroke-linejoin: round; stroke-linecap: round; vector-effect: non-scaling-stroke; }

.phone { position: relative; width: 1080px; height: 1920px; display: grid; grid-template-rows: 72px 168px 1516px 164px; }

.status { background: #054d44; color: #e6edec; display: flex; justify-content: space-between; align-items: center; padding: 0 16px 0 18px; font-weight: 700; }
.clock { font-size: 32px; line-height: 72px; letter-spacing: -.2px; }
.status-right { display: flex; align-items: center; height: 72px; font-size: 30px; }
.speed { width: 107px; letter-spacing: 0; }
.alarm { margin: 2px 0 0 8px; }
.bars { margin: 0 0 0 13px; }
.net { margin-left: 6px; width: 38px; letter-spacing: -.6px; }
.updown { margin: 12px 8px 0 2px; }
.battery { position: relative; width: 66px; height: 30px; border: 3px solid #e6edec; border-radius: 15px; text-align: center; }
.charge { position: absolute; left: 17px; top: 3px; width: 40px; height: 18px; border-radius: 0 9px 9px 0; background: #4a7d76; }
.level { position: relative; display: block; font-size: 25px; line-height: 25px; letter-spacing: -1.5px; }

.bar { background: #075e54; color: #fff; display: flex; align-items: center; padding: 0 60px 0 23px; box-shadow: 0 3px 10px rgba(0, 0, 0, .4); z-index: 1; }
.avatar { margin-left: 11px; }
.seal { fill: #fff; font: 700 12px Roboto, sans-serif; }
.hindi { font: 700 13.500px "Noto Sans", sans-serif; }
.name { margin-left: 23px; flex: 1; font-size: 54px; font-weight: 500; line-height: 64px; letter-spacing: -.1px; white-space: nowrap; }
.video { margin-right: 86px; }
.call { margin-right: 93px; }

.chat { overflow: hidden; padding: 22px 0 0 52px; display: flex; flex-direction: column; gap: 8px; }
.row { display: flex; align-items: center; gap: 24px; height: 910px; flex: none; }
.bubble { position: relative; width: 777px; height: 910px; padding: 12px; background: #fff; border-radius: 18px; box-shadow: 0 2px 2px rgba(0, 0, 0, .2); }
.first { border-top-left-radius: 0; }
.tail { position: absolute; left: -21px; top: 0; }
.photo { width: 753px; height: 753px; border: 1px solid #d6d6d6; border-radius: 7px; background: #ebebeb; overflow: hidden; font-family: Lato, "Open Sans", sans-serif; color: #2b2b2b; }
.forward { width: 96px; height: 96px; border-radius: 50%; background: rgba(70, 60, 50, .22); display: grid; place-items: center; }
.caption { font-size: 48px; line-height: 60px; padding: 15px 0 0 12px; color: #222; white-space: nowrap; }
.time { display: block; text-align: right; font-size: 36px; line-height: 42px; padding: 18px 10px 0 0; color: #999; letter-spacing: -.2px; }

.report { padding-left: 27px; }
.report-title { width: 699px; height: 158px; padding-top: 100px; border-bottom: 2px solid #c6c6c6; font-size: 32.500px; line-height: 40px; font-weight: 400; letter-spacing: 1.150px; }
.sheet { width: 699px; height: 600px; margin-top: 36px; background: #fff; overflow: hidden; border-radius: 3px; box-shadow: 0 3px 9px rgba(0, 0, 0, .4); }
.sheet-title { padding: 27px 0 0 18px; font-size: 32.500px; line-height: 40px; font-weight: 400; letter-spacing: 1.250px; }
.pdf { margin: 20px 0 8px 18px; width: 127px; height: 63px; border-radius: 6px; background: #efad4d; color: #fff; display: flex; align-items: center; gap: 7px; padding-left: 23px; font-size: 26px; font-weight: 700; }
.cells { display: grid; align-items: center; font-size: 25px; line-height: 34px; white-space: nowrap; color: #3c3c3c; }
.head { height: 100px; padding: 0 0 2px 73px; grid-template-columns: 124px 113.500px 110.500px 130.500px 132px 100px; background: #ddd; border-top: 3px solid #c4c4c4; color: #222; font-weight: 700; letter-spacing: -.3px; }
.line1, .line2 { padding-left: 91px; grid-template-columns: 84px 113px 111px 131px 131px 100px; letter-spacing: -.1px; }
.line1 { height: 140px; }
.line2 { height: 106px; padding-bottom: 2px; border-bottom: 2px solid #c8c8c8; }
.sum { padding: 23px 0 0 18px; font-size: 25px; line-height: 34px; color: #3c3c3c; }
.sum b { color: #222; }

.grid { height: 900px; padding: 14px 0 0 27px; display: grid; grid-template-columns: 323px 323px; grid-template-rows: 359px 359px; column-gap: 54px; row-gap: 55px; align-items: start; font-size: 22.500px; line-height: 32px; text-align: center; }
.card { height: 359px; background: #fff; border-radius: 4px; box-shadow: 0 2px 4px rgba(0, 0, 0, .35); }
.card span { color: #484848; }
.card b { letter-spacing: -.3px; }
.card h4 { height: 47px; padding-top: 7px; border-bottom: 2px solid #ccc; font-size: 22.500px; }
.totals { height: 87px; padding-top: 11px; border-bottom: 2px solid #ccc; display: grid; grid-template-columns: 142px 84px 96px; grid-template-rows: 32px 32px; }
.points h5 { padding-top: 15px; font-size: 22.500px; line-height: 32px; }
.pts { display: grid; grid-auto-rows: 32px; margin-top: 5px; }
.et { grid-template-columns: 90px 109px 123px; margin-top: 14px; }
.bd { grid-template-columns: 137px 88px 96px; }

.to-end { position: absolute; left: 947px; top: 1612px; width: 98px; height: 98px; border-radius: 50%; background: rgba(250, 249, 248, .93); box-shadow: 0 2px 4px rgba(0, 0, 0, .15); display: grid; place-items: center; padding-top: 10px; }

.composer { display: flex; gap: 15px; padding: 10px 0 0 15px; }
.field { width: 896px; height: 136px; margin-top: 2px; border-radius: 68px; background: #fff; box-shadow: 0 2px 3px rgba(0, 0, 0, .22); display: flex; align-items: center; padding-left: 31px; }
.smile { margin-top: 1px; }
.entry { position: relative; margin: 4px 0 0 34px; width: 533px; }
.caret { position: absolute; left: 0; top: -4px; width: 6px; height: 73px; background: #00897b; }
.hint { position: relative; display: block; padding-left: 0; font-size: 54px; line-height: 68px; color: #ccc; white-space: nowrap; letter-spacing: -.15px; }
.clip { margin-left: 1px; }
.camera { margin-left: 70px; }
.mic { width: 141px; height: 141px; border-radius: 50%; background: #00887a; box-shadow: 0 3px 5px rgba(0, 0, 0, .25); display: grid; place-items: center; }
```
